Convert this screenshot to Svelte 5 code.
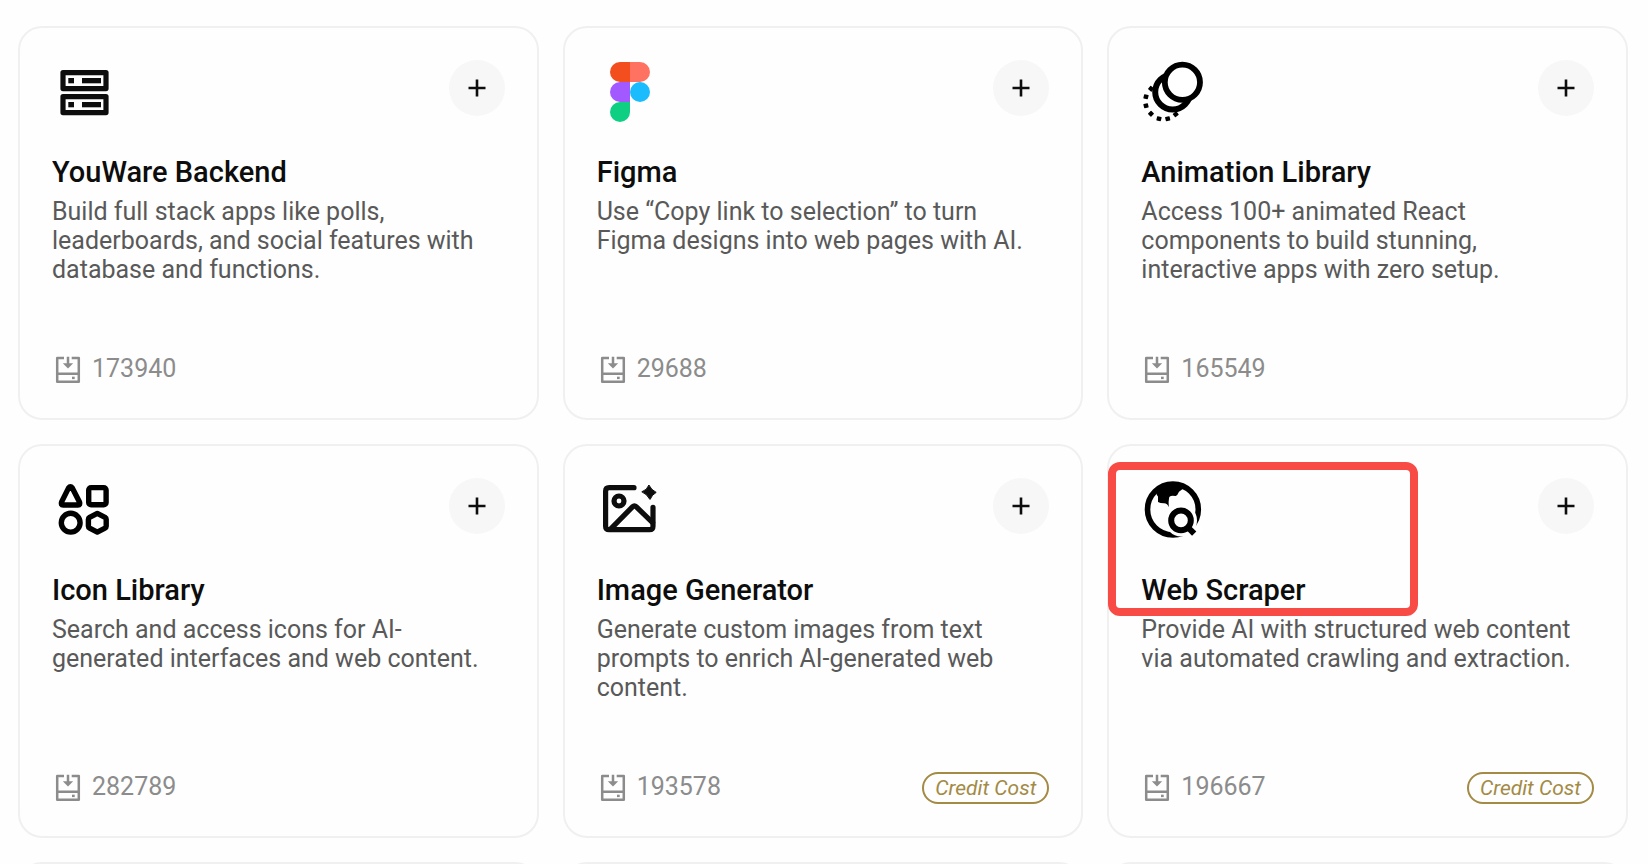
<script>
  const tools = [
    {
      id: 'backend',
      name: 'YouWare Backend',
      text: 'Build full stack apps like polls, leaderboards, and social features with database and functions.',
      installs: 173940
    },
    {
      id: 'figma',
      name: 'Figma',
      text: 'Use “Copy link to selection” to turn Figma designs into web pages with AI.',
      installs: 29688
    },
    {
      id: 'animation',
      name: 'Animation Library',
      text: 'Access 100+ animated React components to build stunning, interactive apps with zero setup.',
      installs: 165549
    },
    {
      id: 'icons',
      name: 'Icon Library',
      text: 'Search and access icons for AI-generated interfaces and web content.',
      installs: 282789
    },
    {
      id: 'image',
      name: 'Image Generator',
      text: 'Generate custom images from text prompts to enrich AI-generated web content.',
      installs: 193578,
      paid: true
    },
    {
      id: 'scraper',
      name: 'Web Scraper',
      text: 'Provide AI with structured web content via automated crawling and extraction.',
      installs: 196667,
      paid: true,
      marked: true
    }
  ];

  // trail dots of the animation icon: x, y, rotation
  const dots = [
    [10, 28.7, 40],
    [5, 36.7, 14],
    [5, 45.7, -14],
    [10, 53.7, -45],
    [18, 58.7, 14],
    [26.7, 58.7, -14],
    [34.7, 54.3, -40]
  ];
</script>

<main>
  <div class="grid">
    {#each tools as tool (tool.id)}
      <article class="card">
        <div class="head">
          <svg class="logo" viewBox="0 0 64 64" aria-hidden="true">
            {#if tool.id === 'backend'}
              <g fill="none" stroke="#0d0d0d" stroke-width="5.2" stroke-linejoin="round">
                <rect x="11" y="12.6" width="43" height="16" />
                <rect x="11" y="36.6" width="43" height="16" />
              </g>
              <g fill="#0d0d0d">
                <rect x="16.3" y="18" width="5.7" height="5.3" />
                <rect x="30" y="18" width="19" height="5.3" />
                <rect x="16.3" y="42" width="5.7" height="5.3" />
                <rect x="30" y="42" width="19" height="5.3" />
              </g>
            {:else if tool.id === 'figma'}
              <path fill="#f24e1e" d="M33 2H23a10 10 0 0 0 0 20h10z" />
              <path fill="#ff7262" d="M33 2h10a10 10 0 0 1 0 20H33z" />
              <path fill="#a259ff" d="M33 22H23a10 10 0 0 0 0 20h10z" />
              <circle fill="#1abcfe" cx="43" cy="32" r="10" />
              <path fill="#0fcf83" d="M23 42h10v10a10 10 0 1 1-10-10z" />
            {:else if tool.id === 'animation'}
              {#each dots as [x, y, turn]}
                <rect x={x - 2.3} y={y - 2.2} width="4.6" height="4.4" rx="0.6" transform="rotate({turn} {x} {y})" />
              {/each}
              <circle cx="31.7" cy="32" r="17.5" fill="#fff" stroke="#000" stroke-width="6" />
              <circle cx="41.4" cy="22.3" r="17.6" fill="#fff" stroke="#000" stroke-width="5.8" />
            {:else if tool.id === 'icons'}
              <g fill="none" stroke="#000" stroke-width="5.4" stroke-linejoin="round">
                <path d="M16.6 9.9 9.6 23.9Q8.400 27 11.200 27H25.900Q28.700 27 27.500 23.900L20.300 9.900Q18.400 7.500 16.600 9.900Z" />
                <rect x="36.7" y="9.6" width="17.4" height="17.2" rx="2.400" />
                <circle cx="18.7" cy="44.7" r="9.4" />
                <path d="M45.3 35.400 53 39.300Q54.200 40 54.200 41.200V48.300Q54.200 49.500 53 50.100L45.300 54.100 37.600 50.100Q36.400 49.500 36.400 48.300V41.200Q36.400 40 37.600 39.300Z" />
              </g>
            {:else if tool.id === 'image'}
              <g fill="none" stroke="#0d0d0d" stroke-width="5.2" stroke-linecap="round" stroke-linejoin="round">
                <path d="M37 9.7H12.2Q8.6 9.7 8.6 13.3V48.2Q8.6 51.7 12.2 51.7H52.5Q56 51.7 56 48.2V29.4" />
                <path d="M14 50.6 35.7 28.6Q37.4 26.9 39.1 28.6L55.6 44.6" />
                <circle cx="22" cy="23" r="5" />
              </g>
              <path fill="#0d0d0d" stroke="#0d0d0d" stroke-linejoin="round" d="M51.900 7Q54.200 12 59.200 14.400 54.800 16.800 53.200 21.300H52.800Q50 16 44.800 13.800 50.200 12 51.900 7Z" />
            {:else}
              <circle cx="31.9" cy="31.5" r="25.4" fill="none" stroke="#000" stroke-width="5.6" />
              <path d="M12 15Q20 5 32 5 42 5 48 11.500 43 9.500 41 11.500L38 13.800Q36.500 17.500 34.700 17.900L31.500 17.800Q28 18 28 20.500 27.200 24 27.800 29.300 26.500 25.300 23 25.200 19 25.200 17 24V18.500Q15.500 17.500 15.300 14.500Z" />
              <path d="M45 59.5 57.5 46 63 52 52 63Z" fill="#fff" />
              <circle cx="40" cy="42.4" r="16" fill="#fff" />
              <path d="M47 49.5 53.2 55.7" stroke="#000" stroke-width="6" />
              <circle cx="40" cy="42.4" r="9.8" fill="#fff" stroke="#000" stroke-width="6" />
            {/if}
          </svg>
          <button type="button" class="add" aria-label="Add {tool.name}">
            <svg viewBox="0 0 24 24" aria-hidden="true">
              <path d="M12 3.5V20.5M3.5 12H20.5" stroke="#0d0d0d" stroke-width="2.6" />
            </svg>
          </button>
        </div>
        <h2>{tool.name}</h2>
        <p>{tool.text}</p>
        <div class="foot">
          <svg class="disk" viewBox="0 0 32 32" aria-hidden="true">
            <path d="M12 3.9H5.2V27.8H26.8V3.9H19.7M5.2 19.7H26.8M16 2.7V10" fill="none" stroke="#8c8c8c" stroke-width="2.5" stroke-linejoin="round" />
            <path d="M10.8 9.200H21.200L16 14.400Z" fill="#8c8c8c" />
            <rect x="20" y="22.700" width="2.700" height="2.400" fill="#8c8c8c" />
          </svg>
          <span class="count">{tool.installs}</span>
          {#if tool.paid}<span class="badge">Credit Cost</span>{/if}
        </div>
        {#if tool.marked}<div class="marker"></div>{/if}
      </article>
    {/each}
    <div class="card"></div>
    <div class="card"></div>
    <div class="card"></div>
  </div>
</main>

<style>
  :global(body) {
    margin: 0;
    background: #fefefe;
  }
  main {
    box-sizing: border-box;
    height: 100vh;
    overflow: hidden;
    padding: 26px 20px 0 18px;
    font-family: Roboto, 'Liberation Sans', sans-serif;
  }
  .grid {
    display: grid;
    grid-template-columns: repeat(3, minmax(0, 1fr));
    gap: 24px;
  }
  .card {
    position: relative;
    box-sizing: border-box;
    min-height: 394px;
    padding: 32px;
    display: flex;
    flex-direction: column;
    border: 2px solid #f0f0f0;
    border-radius: 24px;
    background: #fefefe;
  }
  .head {
    display: flex;
    justify-content: space-between;
    align-items: flex-start;
    margin-bottom: 32px;
  }
  .logo {
    width: 64px;
    height: 64px;
  }
  .add {
    display: grid;
    place-items: center;
    width: 56px;
    height: 56px;
    padding: 0;
    border: 0;
    border-radius: 50%;
    background: #f7f7f7;
    cursor: pointer;
  }
  .add svg {
    width: 24px;
    height: 24px;
  }
  h2 {
    margin: 0 0 8px;
    font-size: 29px;
    line-height: 33px;
    font-weight: 500;
    color: #0d0d0d;
  }
  p {
    margin: 0;
    font-size: 25px;
    line-height: 29px;
    color: #595959;
  }
  .foot {
    display: flex;
    align-items: flex-start;
    gap: 8px;
    height: 32px;
    margin-top: auto;
  }
  .disk {
    width: 32px;
    height: 32px;
  }
  .count {
    font-size: 25px;
    line-height: 29px;
    color: #8c8c8c;
  }
  .badge {
    box-sizing: border-box;
    height: 32px;
    margin-left: auto;
    padding: 0 11px;
    border: 2px solid #a38a45;
    border-radius: 16px;
    font-size: 21px;
    line-height: 28px;
    font-style: italic;
    color: #a38a45;
  }
  .marker {
    position: absolute;
    top: 16px;
    left: -1px;
    box-sizing: border-box;
    width: 310px;
    height: 154px;
    border: 8px solid #f84b46;
    border-radius: 12px;
    pointer-events: none;
  }
</style>
